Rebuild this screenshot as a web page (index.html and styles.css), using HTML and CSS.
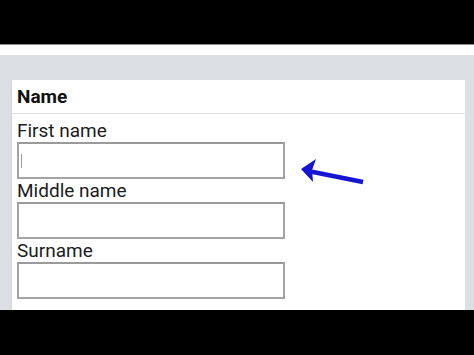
FILE: index.html
```html
<!DOCTYPE html>
<html>
<head>
<meta charset="utf-8">
<link rel="stylesheet" href="styles.css">
</head>
<body>
<div class="screen">
  <div class="topbar"></div>
  <div class="strip"></div>
  <div class="main">
    <div class="card">
      <div class="card-head">Name</div>
      <div class="fields">
        <div class="field">
          <div class="label">First name</div>
          <div class="input"><span class="caret"></span></div>
        </div>
        <div class="field">
          <div class="label">Middle name</div>
          <div class="input"></div>
        </div>
        <div class="field">
          <div class="label">Surname</div>
          <div class="input"></div>
        </div>
      </div>
    </div>
    <svg class="arrow" width="70" height="32" viewBox="0 0 70 32">
      <path d="M8 14 L63 25" stroke="#1414d2" stroke-width="4.5" fill="none" stroke-linecap="butt"/>
      <path d="M1 12 L16 2 L12 13 L13 25 Z" fill="#1414d2"/>
    </svg>
  </div>
  <div class="bottombar"></div>
</div>
</body>
</html>
```
FILE: styles.css
```css
html, body {
  margin: 0;
  padding: 0;
  background: #000;
}
.screen {
  width: 474px;
  height: 355px;
  display: flex;
  flex-direction: column;
  overflow: hidden;
  font-family: Roboto, "Noto Sans", sans-serif;
  color: #1a1a1a;
}
.topbar {
  height: 44px;
  background: #000;
  border-bottom: 1px solid #8a8a8a;
  flex: none;
}
.strip {
  height: 10px;
  background: #fff;
  flex: none;
}
.main {
  position: relative;
  flex: 1;
  background: #dcdfe3;
  padding: 25px 9px 0 12px;
  overflow: hidden;
}
.card {
  background: #fff;
  height: 100%;
  box-shadow: -1px 0 0 #d2d5d9;
}
.card-head {
  height: 34px;
  box-sizing: border-box;
  border-bottom: 1px solid #e3e3e3;
  padding: 5px 0 0 5px;
  font-weight: 700;
  font-size: 19px;
  line-height: 24px;
  color: #111;
}
.fields {
  padding: 5px 0 0 5px;
  display: flex;
  flex-direction: column;
}
.field {
  display: flex;
  flex-direction: column;
}
.label {
  font-size: 19px;
  line-height: 23px;
  height: 23px;
  color: #1c1c1c;
}
.input {
  width: 268px;
  height: 37px;
  box-sizing: border-box;
  border: 2px solid #a4a4a4;
  border-top-color: #9a9a9a;
  display: flex;
  align-items: center;
  padding-left: 2px;
}
.caret {
  width: 1px;
  height: 14px;
  background: #9a9a9a;
}
.bottombar {
  height: 45px;
  background: #000;
  flex: none;
}
.arrow {
  position: absolute;
  left: 300px;
  top: 102px;
}
```
